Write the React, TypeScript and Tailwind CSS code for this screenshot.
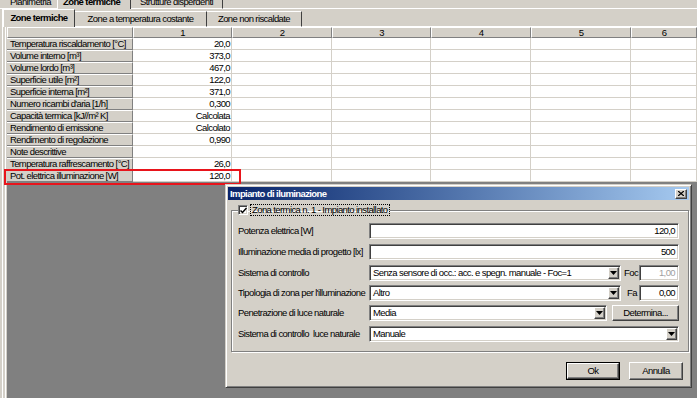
import React from 'react'

const rows: [string, string][] = [
  ['Temperatura riscaldamento [°C]', '20,0'],
  ['Volume interno [m³]', '373,0'],
  ['Volume lordo [m³]', '467,0'],
  ['Superficie utile [m²]', '122,0'],
  ['Superficie interna [m²]', '371,0'],
  ["Numero ricambi d'aria [1/h]", '0,300'],
  ['Capacità termica [kJ//m² K]', 'Calcolata'],
  ['Rendimento di emissione', 'Calcolato'],
  ['Rendimento di regolazione', '0,990'],
  ['Note descrittive', ''],
  ['Temperatura raffrescamento [°C]', '26,0'],
  ['Pot. elettrica illuminazione [W]', '120,0'],
]

const cols = ['w-[99px]', 'w-[100px]', 'w-[99px]', 'w-[100px]', 'w-[100px]', 'flex-1']

const sunken =
  'border border-t-[#808080] border-l-[#808080] border-r-white border-b-white shadow-[inset_1px_1px_0_#404040,inset_-1px_-1px_0_#d4d0c8]'
const raised =
  'border border-t-white border-l-white border-r-[#404040] border-b-[#404040] shadow-[inset_-1px_-1px_0_#808080]'

function Arrow() {
  return (
    <span className={`${raised} bg-[#d4d0c8] w-[11px] h-full flex items-center justify-center shrink-0`}>
      <svg width="7" height="4" viewBox="0 0 7 4">
        <path d="M0 0h7L3.5 4z" fill="#000" />
      </svg>
    </span>
  )
}

function Combo({ text, className }: { text: string; className: string }) {
  return (
    <div className={`${sunken} ${className} bg-white h-[16px] flex p-[1px]`}>
      <span className="flex-1 pl-[2px] leading-[12px] whitespace-nowrap overflow-hidden">{text}</span>
      <Arrow />
    </div>
  )
}

function Field({ text, className, muted }: { text: string; className: string; muted?: boolean }) {
  return (
    <div
      className={`${sunken} ${className} bg-white h-[16px] pr-[3px] text-right leading-[14px] ${
        muted ? 'text-[#a0a0a0]' : ''
      }`}
    >
      {text}
    </div>
  )
}

export default function App() {
  return (
    <div className="w-[697px] h-[398px] overflow-hidden relative bg-[#d4d0c8] flex flex-col text-[9.5px] tracking-[-0.6px] text-black font-['Liberation_Sans',Arial,sans-serif]">
      {/* outer tabs, cut at the top */}
      <div className="h-[9px] flex shrink-0 overflow-hidden">
        <div className="w-[57px] border-b border-white pl-[10px] -mt-[4px] leading-[12px]">Planimetria</div>
        <div className="w-[74px] border-l border-white border-r border-r-[#404040] pl-[5px] font-bold -mt-[4px] leading-[12px]">
          Zone termiche
        </div>
        <div className="w-[92px] border-b border-white border-r border-r-[#404040] pl-[9px] -mt-[4px] leading-[12px]">
          Strutture disperdenti
        </div>
        <div className="flex-1 border-b border-white" />
      </div>

      <div className="flex-1 flex flex-col ml-[2px] border-l border-white">
        {/* inner tabs */}
        <div className="h-[18px] flex items-end shrink-0">
          <div className="h-[18px] w-[72px] border-t border-l border-white border-r border-r-[#404040] font-bold flex items-center justify-center">
            Zone termiche
          </div>
          <div className="h-[16px] w-[132px] border-t border-white border-b border-r border-r-[#404040] flex items-center justify-center">
            Zone a temperatura costante
          </div>
          <div className="h-[16px] w-[95px] border-t border-white border-b border-r border-r-[#404040] flex items-center justify-center">
            Zone non riscaldate
          </div>
          <div className="flex-1 h-[16px] border-b border-white" />
        </div>

        <div className="flex-1 flex flex-col ml-[2px] border-l border-white pl-[1px]">
          {/* grid header */}
          <div className="flex h-[11px] shrink-0">
            <div className="w-[126px] border-t border-l border-white border-r border-r-[#808080] border-b border-b-[#808080]" />
            {cols.map((c, i) => (
              <div
                key={i}
                className={`${c} border-t border-l border-white border-r border-r-[#808080] border-b border-b-[#808080] text-center leading-[9px]`}
              >
                {i + 1}
              </div>
            ))}
          </div>
          {rows.map(([label, value]) => (
            <div key={label} className="flex h-[12px] shrink-0">
              <div className="w-[126px] border-t border-white border-r border-r-[#808080] border-b border-b-[#808080] pl-[3px] leading-[10px] whitespace-nowrap overflow-hidden">
                {label}
              </div>
              {cols.map((c, i) => (
                <div
                  key={i}
                  className={`${c} bg-white border-r border-b border-[#d4d0c8] text-right pr-[1px] leading-[11px]`}
                >
                  {i === 0 ? value : ''}
                </div>
              ))}
            </div>
          ))}
          <div className="flex-1 bg-[#808080]" />
        </div>
      </div>

      {/* highlight of the selected row */}
      <div className="absolute left-[4px] top-[169px] w-[237px] h-[16px] border-2 border-[#e8141b]" />

      {/* dialog */}
      <div className="absolute left-[225px] top-[184px] w-[467px] h-[204px] bg-[#d4d0c8] border border-t-[#d4d0c8] border-l-[#d4d0c8] border-r-[#404040] border-b-[#404040] shadow-[inset_1px_1px_0_#fff,inset_-1px_-1px_0_#808080] p-[2px] flex flex-col">
        <div className="h-[13px] shrink-0 bg-linear-to-r from-[#0a246a] to-[#a6caf0] flex items-center pl-[2px] pr-[2px]">
          <span className="flex-1 text-white font-bold leading-[12px]">Impianto di iluminazione</span>
          <span className={`${raised} bg-[#d4d0c8] w-[12px] h-[10px] flex items-center justify-center`}>
            <svg width="6" height="5" viewBox="0 0 6 5">
              <path d="M0 0l6 5M6 0L0 5" stroke="#000" strokeWidth="1.3" />
            </svg>
          </span>
        </div>

        <fieldset className="mt-[4px] ml-[3px] h-[148px] border border-[#808080] shadow-[inset_1px_1px_0_#fff,1px_1px_0_#fff] pl-[6px] pr-[9px] pt-[7px]">
          <legend className="flex items-center h-[12px]">
            <span className={`${sunken} bg-white w-[10px] h-[10px] flex items-center justify-center`}>
              <svg width="7" height="7" viewBox="0 0 7 7">
                <path d="M0.5 3.5l2 2 4-4.5" stroke="#000" strokeWidth="1.5" fill="none" />
              </svg>
            </span>
            <span className="ml-[2px] px-[1px] border border-dotted border-black leading-[10px]">
              Zona termica n. 1 - Impianto installato
            </span>
          </legend>

          <div className="flex items-center h-[16px]">
            <span className="w-[131px]">Potenza elettrica [W]</span>
            <Field text="120,0" className="flex-1" />
          </div>
          <div className="flex items-center h-[16px] mt-[5px]">
            <span className="w-[131px]">Illuminazione media di progetto [lx]</span>
            <Field text="500" className="flex-1" />
          </div>
          <div className="flex items-center h-[16px] mt-[5px]">
            <span className="w-[131px]">Sistema di controllo</span>
            <Combo text="Senza sensore di occ.: acc. e spegn. manuale - Foc=1" className="w-[252px]" />
            <span className="w-[18px] pl-[3px]">Foc</span>
            <Field text="1,00" className="flex-1" muted />
          </div>
          <div className="flex items-center h-[16px] mt-[4px]">
            <span className="w-[131px] whitespace-nowrap">Tipologia di zona per l'illuminazione</span>
            <Combo text="Altro" className="w-[252px]" />
            <span className="w-[18px] pl-[6px]">Fa</span>
            <Field text="0,00" className="flex-1" />
          </div>
          <div className="flex items-center h-[16px] mt-[4px]">
            <span className="w-[131px]">Penetrazione di luce naturale</span>
            <Combo text="Media" className="w-[238px]" />
            <button className={`${raised} ml-[5px] flex-1 h-[16px] bg-[#d4d0c8] leading-[12px]`}>Determina...</button>
          </div>
          <div className="flex items-center h-[16px] mt-[5px]">
            <span className="w-[131px]">Sistema di controllo&nbsp; luce naturale</span>
            <Combo text="Manuale" className="flex-1" />
          </div>
        </fieldset>

        <div className="flex justify-end gap-[9px] mt-[10px] mr-[6px]">
          <button className="w-[54px] h-[18px] border border-black p-0 bg-[#d4d0c8]">
            <span className={`${raised} w-full h-full flex items-center justify-center`}>Ok</span>
          </button>
          <button className={`${raised} w-[54px] h-[18px] bg-[#d4d0c8] flex items-center justify-center`}>Annulla</button>
        </div>
      </div>
    </div>
  )
}
